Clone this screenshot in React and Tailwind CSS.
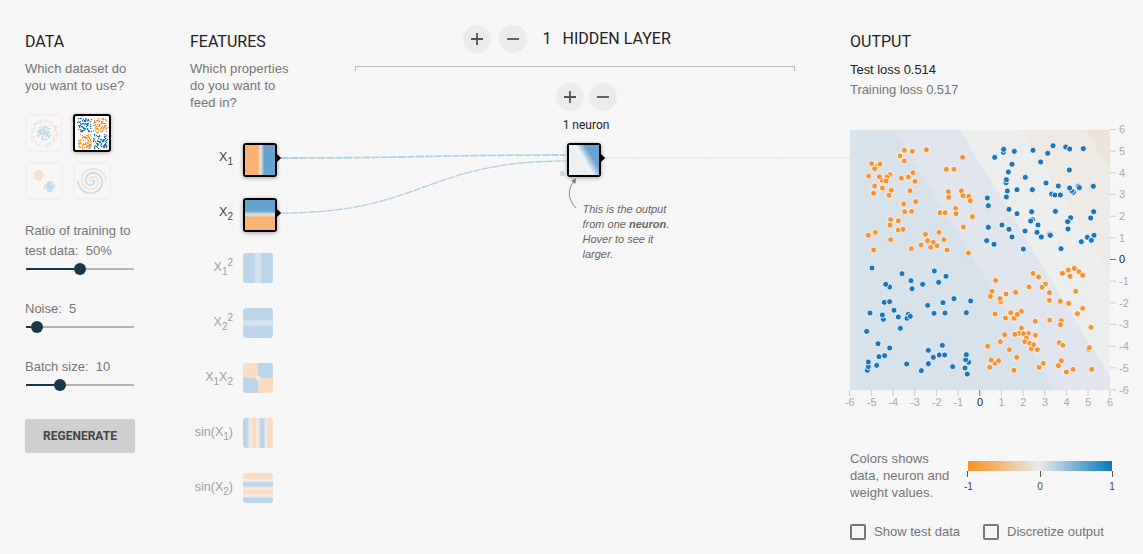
import React from "react";

const BLUE = "#1a75ba";
const ORANGE = "#f59331";

// Samples per quadrant, in thirds of a pixel from the quadrant's origin.
const QUADRANTS = [
  {
    color: ORANGE, ox: -5, oy: -5,
    points: [[178,76],[202,79],[244,74],[165,93],[178,108],[353,97],[304,133],[327,133],[97,122],[89,131],[80,116],[105,117],[71,153],[112,166],[135,149],[126,156],[103,155],[123,168],[169,160],[190,156],[204,143],[210,169],[89,183],[112,189],[86,205],[139,196],[132,211],[195,197],[310,200],[311,217],[349,198],[371,214],[354,212],[376,227],[176,237],[212,230],[179,260],[200,259],[285,263],[300,263],[332,250],[333,266],[382,275],[355,306],[137,284],[160,287],[135,300],[160,315],[174,313],[70,331],[91,322],[137,344],[86,375],[199,371],[241,328],[282,322],[248,347],[265,352],[228,360],[257,367],[276,362],[297,344],[306,375],[370,384]],
  },
  {
    color: BLUE, ox: 125, oy: -5,
    points: [[85,82],[86,73],[118,79],[59,97],[174,76],[234,62],[272,66],[284,72],[325,71],[218,85],[111,118],[197,111],[283,135],[100,141],[151,157],[93,173],[94,164],[213,174],[250,183],[355,184],[97,198],[126,194],[172,194],[94,216],[230,207],[240,210],[256,210],[295,202],[290,197],[284,189],[310,184],[313,188],[37,219],[40,242],[102,253],[126,266],[172,284],[167,288],[170,260],[241,259],[356,260],[347,279],[287,278],[278,290],[279,312],[81,300],[102,313],[40,307],[189,300],[186,322],[150,318],[199,336],[224,328],[226,331],[111,336],[35,347],[57,358],[145,372],[258,371],[319,350],[337,337],[357,331],[349,346]],
  },
  {
    color: BLUE, ox: -5, oy: 125,
    points: [[81,39],[171,56],[268,48],[303,64],[134,96],[122,88],[198,77],[201,101],[233,88],[281,82],[118,142],[134,140],[327,131],[377,138],[248,151],[294,143],[147,166],[75,174],[115,193],[112,180],[160,186],[190,178],[186,190],[196,184],[267,175],[300,174],[364,173],[166,220],[65,229],[99,266],[134,279],[292,271],[102,305],[119,302],[250,286],[265,307],[283,300],[299,300],[67,346],[70,335],[70,321],[95,331],[185,327],[250,326],[229,347],[323,335],[371,322],[362,314],[364,299],[360,339],[367,357]],
  },
  {
    color: ORANGE, ox: 125, oy: 125,
    points: [[62,76],[174,55],[191,66],[262,55],[285,64],[280,45],[298,40],[312,50],[323,61],[162,96],[211,87],[201,97],[51,109],[46,124],[93,117],[122,112],[223,113],[302,109],[77,140],[75,131],[223,136],[256,139],[281,145],[323,160],[307,176],[60,177],[107,173],[139,169],[117,190],[127,178],[91,189],[181,199],[224,195],[259,197],[256,209],[348,217],[139,219],[133,235],[120,238],[160,235],[146,236],[154,249],[181,241],[89,239],[76,260],[38,274],[149,260],[165,265],[169,281],[176,269],[187,284],[103,284],[253,263],[264,271],[340,283],[343,278],[125,307],[60,325],[48,315],[71,317],[44,337],[117,346],[205,325],[192,337],[259,317],[250,332],[294,343],[274,351],[350,343]],
  },
];

function makeRandom(seed) {
  let a = seed;
  return () => {
    a = (a + 0x6d2b79f5) | 0;
    let t = Math.imul(a ^ (a >>> 15), 1 | a);
    t = (t + Math.imul(t ^ (t >>> 7), 61 | t)) ^ t;
    return ((t ^ (t >>> 14)) >>> 0) / 4294967296;
  };
}

function xorDots() {
  const rand = makeRandom(71);
  const dots = [];
  for (let i = 0; i < 300; i++) {
    const right = i % 2 === 1;
    const bottom = i % 4 > 1;
    const x = (right ? 18 : 2) + rand() * 14;
    const y = (bottom ? 18 : 2) + rand() * 14;
    dots.push([x, y, right === bottom ? BLUE : ORANGE]);
  }
  return dots;
}

function circleDots() {
  const rand = makeRandom(19);
  const dots = [];
  for (let i = 0; i < 220; i++) {
    const inner = i % 2 === 0;
    const a = rand() * Math.PI * 2;
    const r = inner ? Math.sqrt(rand()) * 7 : 10.5 + rand() * 3.5;
    dots.push([16.5 + r * Math.cos(a), 16.5 + r * Math.sin(a), inner ? BLUE : ORANGE]);
  }
  return dots;
}

function gaussDots() {
  const rand = makeRandom(37);
  const dots = [];
  for (let i = 0; i < 260; i++) {
    const blue = i % 2 === 0;
    const a = rand() * Math.PI * 2;
    const r = rand() * 5.2;
    const c = blue ? 22 : 11;
    dots.push([c + r * Math.cos(a), c + r * Math.sin(a), blue ? BLUE : ORANGE]);
  }
  return dots;
}

function spiralPath(delta) {
  const pts = [];
  for (let i = 2; i <= 70; i++) {
    const k = i / 70;
    const t = 1.75 * k * 2 * Math.PI + delta;
    pts.push(`${(17 + 14.2 * k * Math.sin(t)).toFixed(2)} ${(17 - 14.2 * k * Math.cos(t)).toFixed(2)}`);
  }
  return "M" + pts.join("L");
}

function Dots({ dots }) {
  return (
    <svg viewBox="0 0 34 34" className="block h-[34px] w-[34px]">
      {dots.map(([x, y, c], i) => (
        <rect key={i} x={Math.round(x)} y={Math.round(y)} width="1.2" height="1.2" fill={c} />
      ))}
    </svg>
  );
}

function Dataset({ active, children }) {
  return active ? (
    <div className="h-[38px] w-[38px] rounded-[3px] border-2 border-black bg-white shadow-[0_1px_4px_rgba(0,0,0,0.3)]">{children}</div>
  ) : (
    <div className="h-[38px] w-[38px] rounded-[3px] border-2 border-[#f0f0f0]">
      <div className="opacity-[0.22]">{children}</div>
    </div>
  );
}

function Slider({ label, value, position }) {
  return (
    <div>
      <div className="leading-5">{label}&nbsp; {value}</div>
      <div className="mt-0.5 ml-px flex h-3 w-[108px] items-center">
        <div className="h-0.5 bg-[#183849]" style={{ width: position - 6 }} />
        <div className="h-3 w-3 shrink-0 rounded-full bg-[#183849]" />
        <div className="h-0.5 flex-1 bg-[#b4b4b4]" />
      </div>
    </div>
  );
}

const Title = ({ children }) => (
  <h2 className="font-['Roboto',sans-serif] text-[16px] leading-5 whitespace-nowrap text-[#222]">{children}</h2>
);

function RoundButton({ minus }) {
  return (
    <button className="flex h-7 w-7 items-center justify-center rounded-full bg-[#ebebeb]">
      <svg viewBox="0 0 12 12" className="h-3 w-3" stroke="#555" strokeWidth="1.8">
        <path d={minus ? "M0 6H12" : "M0 6H12M6 0V12"} />
      </svg>
    </button>
  );
}

const Sub = ({ children }) => <span className="align-[-4px] text-[10px] leading-none">{children}</span>;
const Sup = ({ children }) => <span className="align-[5px] text-[10px] leading-none">{children}</span>;

const FEATURES = [
  { label: <>X<Sub>1</Sub></>, active: true, fill: "bg-[linear-gradient(90deg,#f9b374_0_42%,#e8e4dd_53%,#66a3d1_64%)]" },
  { label: <>X<Sub>2</Sub></>, active: true, fill: "bg-[linear-gradient(180deg,#66a3d1_0_36%,#e8e4dd_49%,#f9b374_58%)]" },
  { label: <>X<Sub>1</Sub><Sup>2</Sup></>, fill: "bg-[linear-gradient(90deg,#bdd5ea_0_36%,#d5e4ed_44%_56%,#bdd5ea_64%)]" },
  { label: <>X<Sub>2</Sub><Sup>2</Sup></>, fill: "bg-[linear-gradient(180deg,#bdd5ea_0_36%,#d5e4ed_44%_56%,#bdd5ea_64%)]" },
  { label: <>X<Sub>1</Sub>X<Sub>2</Sub></>, fill: "bg-[radial-gradient(circle,#ececea_0_7%,transparent_17%),conic-gradient(#bdd5ea_0_25%,#f9dcc3_25%_50%,#bdd5ea_50%_75%,#f9dcc3_75%)]" },
  { label: <>sin(X<Sub>1</Sub>)</>, fill: "bg-[linear-gradient(90deg,#bdd5ea_0_12%,#f1efec_25%,#f9dcc3_33%_42%,#f1efec_49%,#bdd5ea_60%_68%,#f1efec_77%,#f9dcc3_85%)]" },
  { label: <>sin(X<Sub>2</Sub>)</>, fill: "bg-[linear-gradient(180deg,#f9dcc3_0_16%,#f1efec_25%,#bdd5ea_34%_42%,#f1efec_50%,#f9dcc3_58%_68%,#f1efec_77%,#bdd5ea_85%)]" },
];

function Heatmap() {
  const ticks = [-6, -5, -4, -3, -2, -1, 0, 1, 2, 3, 4, 5, 6];
  const pos = (v) => ((v + 6) * 260) / 12 - (v === -6 ? 0.5 : 0.3);
  return (
    <svg width="260" height="260" viewBox="0 0 260 260" className="block overflow-visible font-['Liberation_Sans',Arial,sans-serif] text-[11px]">
      <rect width="260" height="260" fill="#d8e2ea" />
      <path d="M44 0H260V260H205Z" fill="#e1e6ee" />
      <path d="M110 0H260V247Z" fill="#ebeeed" />
      <path d="M172 0H260V144Z" fill="#ede9e5" />
      <path d="M235 0H260V39Z" fill="#ede3db" />
      {QUADRANTS.map((q, i) =>
        q.points.map(([x, y], j) => (
          <circle key={`${i}-${j}`} cx={x / 3 + q.ox} cy={y / 3 + q.oy} r="3" fill={q.color} stroke="#fff" strokeWidth="0.8" />
        ))
      )}
      {ticks.map((v) => {
        const text = v === 0 ? "#222" : "#aaa";
        const line = v === 0 ? "#777" : "#ccc";
        return (
          <g key={v}>
            <path d={`M${pos(v)} 260v6M260 ${260 - pos(v) - 0.8}h6`} stroke={line} />
            <text x={pos(v) + 0.3} y="276" textAnchor="middle" fill={text}>{v}</text>
            <text x="269" y={263 - pos(v)} fill={text}>{v}</text>
          </g>
        );
      })}
    </svg>
  );
}

function Checkbox({ label }) {
  return (
    <label className="flex items-center gap-2">
      <span className="h-4 w-4 rounded-[2px] border-2 border-[#777]" />
      <span className="whitespace-nowrap leading-4">{label}</span>
    </label>
  );
}

function Links() {
  return (
    <svg viewBox="0 0 1143 554" className="pointer-events-none absolute inset-0 h-[554px] w-[1143px]" fill="none">
      <g stroke="#b2cfe1" strokeDasharray="8 1">
        <path d="M281 158C424 158 424 155 567 155" strokeWidth="1.8" />
        <path d="M281 213C424 213 424 161 567 161" strokeWidth="1.4" />
      </g>
      <path d="M605 158H850" stroke="#ebe5e0" strokeWidth="1.5" strokeDasharray="8 1" />
      <g fill="#000">
        <path d="M277 154L281.2 158L277 162Z" />
        <path d="M277 209L281.2 213L277 217Z" />
        <path d="M601 154L605.2 158L601 162Z" />
      </g>
      <rect x="560" y="171" width="5" height="5" fill="#c7dae6" />
      <path d="M576 208C568 200 567 190 574 181" stroke="#8a8a8a" />
      <path d="M576 178L575.2 184L571.5 180.8Z" fill="#777" />
    </svg>
  );
}

export default function App() {
  return (
    <div className="relative flex h-[554px] w-[1143px] overflow-hidden bg-[#f6f6f6] pl-[25px] font-['Liberation_Sans',Arial,sans-serif] text-[13px] leading-[17px] text-[#757575]">
      <Links />

      <section className="w-[110px] pt-8">
        <Title>DATA</Title>
        <p className="mt-2 tracking-[0.06px] whitespace-nowrap">Which dataset do<br />you want to use?</p>
        <div className="mt-5 grid w-[86px] grid-cols-2 gap-2.5">
          <Dataset><Dots dots={circleDots()} /></Dataset>
          <Dataset active><Dots dots={xorDots()} /></Dataset>
          <Dataset><Dots dots={gaussDots()} /></Dataset>
          <Dataset>
            <svg viewBox="0 0 34 34" className="block h-[34px] w-[34px]" fill="none" strokeWidth="1.6">
              <path d={spiralPath(0)} stroke={BLUE} />
              <path d={spiralPath(Math.PI)} stroke={ORANGE} />
            </svg>
          </Dataset>
        </div>
        <div className="mt-[21px] flex flex-col gap-6 whitespace-nowrap">
          <Slider label={<>Ratio of training to<br />test data:</>} value="50%" position={54} />
          <Slider label="Noise:" value="5" position={11} />
          <Slider label="Batch size:" value="10" position={34} />
        </div>
        <button className="mt-7 block h-[34px] w-[110px] rounded-[2px] bg-[#cfcfcf] font-['Roboto',sans-serif] text-[12px] font-bold text-[#444]">REGENERATE</button>
      </section>

      <section className="ml-[55px] w-[110px] pt-8">
        <Title>FEATURES</Title>
        <p className="mt-2 tracking-[0.06px] whitespace-nowrap">Which properties<br />do you want to<br />feed in?</p>
        <div className="mt-8">
          {FEATURES.map((f, i) => (
            <div key={i} className="flex h-[55px] items-start gap-2.5">
              <div className={`w-[43px] text-right text-[12.5px] leading-[28px] whitespace-nowrap ${f.active ? "text-[#444]" : "text-[#a0a0a0]"}`}>{f.label}</div>
              {f.active ? (
                <div className="h-[34px] w-[34px] rounded-[3px] bg-black p-0.5 shadow-[0_1px_4px_rgba(0,0,0,0.35)]">
                  <div className={`h-full w-full ${f.fill}`} />
                </div>
              ) : (
                <div className={`h-[30px] w-[30px] rounded-[3px] ${f.fill}`} />
              )}
            </div>
          ))}
        </div>
      </section>

      <section className="ml-[55px] w-[440px] pt-[25px]">
        <div className="flex items-center pl-[108px]">
          <div className="flex gap-2"><RoundButton /><RoundButton minus /></div>
          <div className="ml-[15.5px] flex gap-[11px]"><Title>1</Title><Title>HIDDEN LAYER</Title></div>
        </div>
        <div className="mt-[13px] h-[5px] border border-b-0 border-[#bbb]" />
        <div className="mt-3 flex gap-[5px] pl-[201px]"><RoundButton /><RoundButton minus /></div>
        <div className="mt-1.5 ml-[201px] w-[60px] text-center font-['Roboto',sans-serif] text-[12px] leading-4 text-[#222]">1 neuron</div>
        <div className="mt-2.5 ml-[212px] h-[34px] w-[34px] rounded-[3px] bg-black p-0.5 shadow-[0_1px_4px_rgba(0,0,0,0.35)]">
          <div className="h-full w-full bg-[linear-gradient(59deg,#eceff0_0_40%,#f0f2f5_51%,#66a3d1_71%)]" />
        </div>
        <p className="mt-[25px] ml-[227.5px] text-[11px] leading-[15px] whitespace-nowrap text-[#666] italic">
          This is the output<br />from one <b>neuron</b>.<br />Hover to see it<br />larger.
        </p>
      </section>

      <section className="ml-[55px] w-[293px] pt-8">
        <Title>OUTPUT</Title>
        <div className="mt-2 leading-5 tracking-[-0.05px]">
          <div className="text-[#222]">Test loss 0.514</div>
          <div>Training loss 0.517</div>
        </div>
        <div className="mt-[30px]"><Heatmap /></div>
        <div className="mt-[60px] flex">
          <p className="w-[118px] tracking-[0.06px] whitespace-nowrap">Colors shows<br />data, neuron and<br />weight values.</p>
          <div className="mt-[11px] w-36">
            <div className="h-2.5 bg-[linear-gradient(90deg,#f59322,#e8eaeb_50%,#0877bd)]" />
            <div className="-mx-px flex justify-between">
              <span className="h-1.5 w-px bg-[#555]" />
              <span className="h-1.5 w-px bg-[#555]" />
              <span className="h-1.5 w-px bg-[#555]" />
            </div>
            <div className="mt-1 flex justify-between text-[10px] leading-[11px] text-[#444]">
              <span className="-ml-1 w-2">-1</span>
              <span className="w-2 text-center">0</span>
              <span className="-mr-1 w-2 text-center">1</span>
            </div>
          </div>
        </div>
        <div className="mt-[14px] flex pt-[9px]">
          <div className="w-[133px]"><Checkbox label="Show test data" /></div>
          <Checkbox label="Discretize output" />
        </div>
      </section>
    </div>
  );
}
